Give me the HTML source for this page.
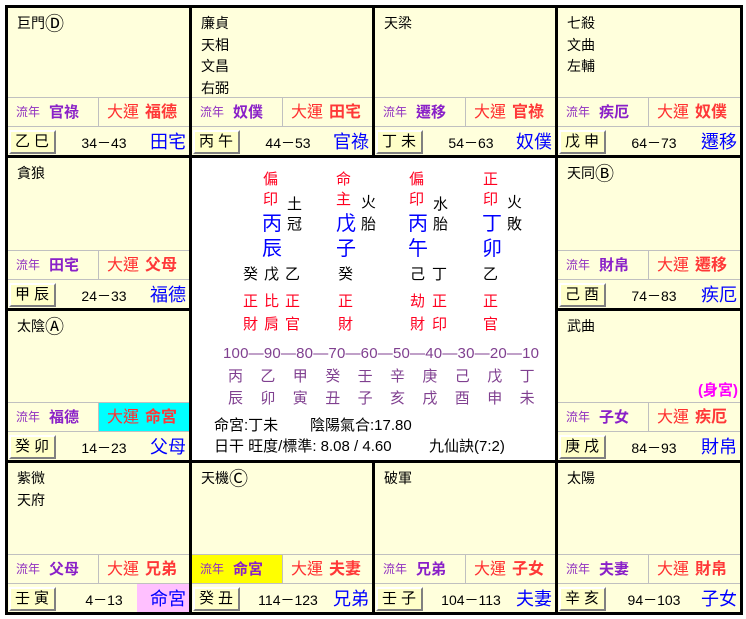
<!DOCTYPE html>
<html><head><meta charset="utf-8"><style>
*{margin:0;padding:0;box-sizing:border-box}
body{width:746px;height:619px;background:#fff;position:relative;overflow:hidden;font-family:"Liberation Sans","Noto Sans CJK TC",sans-serif;font-size:14px;color:#000}
.a{position:absolute;white-space:nowrap;line-height:1}
.frame{position:absolute;left:5px;top:5px;width:738px;height:610px;background:#000}
.c{position:absolute;background:#ffffdc;overflow:hidden}
.st{position:absolute;left:9px;top:5px;font-size:14px;line-height:21.5px}
.ci{font-family:"DejaVu Sans",sans-serif;font-size:19px;vertical-align:-2px;line-height:14px}
.g1,.g2{position:absolute;left:0;right:0;height:1px;background:#c0c0c0}
.gv{position:absolute;left:90px;width:1px;height:29px;background:#c0c0c0}
.ln{position:absolute;left:8px;font-size:12px;color:#9030c0}
.lp{position:absolute;left:41px;font-size:15px;font-weight:bold;color:#8a20c8}
.dy{position:absolute;left:99px;font-size:16px;color:#ff3030}
.dp{position:absolute;left:137px;font-size:16px;font-weight:bold;color:#ff3838}
.bt{position:absolute;left:1px;width:47px;height:24px;background:#ffffc8;border:2px solid;border-color:#fff #808080 #808080 #fff;font-size:15px;text-align:center;line-height:20px;letter-spacing:4px;padding-left:3px}
.ag{position:absolute;left:62px;width:68px;text-align:center;font-size:14px}
.bp{position:absolute;right:3px;font-size:18px;color:#0000ff}
.r{color:#ff0020;font-size:15px}.b{color:#0000ff;font-size:20px}.p{color:#804090}
</style></head><body>
<div class="frame"></div>
<div class="a" style="left:192px;top:158px;width:363px;height:302px;background:#fff"></div>

<div class="c" style="left:8px;top:8px;width:181px;height:147px">
<div class="st">巨門<span class="ci">Ⓓ</span></div>
<div class="g1" style="top:89px"></div><div class="g2" style="top:118px"></div><div class="gv" style="top:89px"></div>
<div class="a ln" style="top:98px">流年</div><div class="a lp" style="top:97px">官祿</div>
<div class="a dy" style="top:97px">大運</div><div class="a dp" style="top:97px">福德</div>
<div class="bt" style="top:122px">乙巳</div><div class="a ag" style="top:128px">34－43</div><div class="a bp" style="top:125px">田宅</div>
</div>

<div class="c" style="left:192px;top:8px;width:180px;height:147px">
<div class="st">廉貞<br>天相<br>文昌<br>右弼</div>
<div class="g1" style="top:89px"></div><div class="g2" style="top:118px"></div><div class="gv" style="top:89px"></div>
<div class="a ln" style="top:98px">流年</div><div class="a lp" style="top:97px">奴僕</div>
<div class="a dy" style="top:97px">大運</div><div class="a dp" style="top:97px">田宅</div>
<div class="bt" style="top:122px">丙午</div><div class="a ag" style="top:128px">44－53</div><div class="a bp" style="top:125px">官祿</div>
</div>

<div class="c" style="left:375px;top:8px;width:180px;height:147px">
<div class="st">天梁</div>
<div class="g1" style="top:89px"></div><div class="g2" style="top:118px"></div><div class="gv" style="top:89px"></div>
<div class="a ln" style="top:98px">流年</div><div class="a lp" style="top:97px">遷移</div>
<div class="a dy" style="top:97px">大運</div><div class="a dp" style="top:97px">官祿</div>
<div class="bt" style="top:122px">丁未</div><div class="a ag" style="top:128px">54－63</div><div class="a bp" style="top:125px">奴僕</div>
</div>

<div class="c" style="left:558px;top:8px;width:182px;height:147px">
<div class="st">七殺<br>文曲<br>左輔</div>
<div class="g1" style="top:89px"></div><div class="g2" style="top:118px"></div><div class="gv" style="top:89px"></div>
<div class="a ln" style="top:98px">流年</div><div class="a lp" style="top:97px">疾厄</div>
<div class="a dy" style="top:97px">大運</div><div class="a dp" style="top:97px">奴僕</div>
<div class="bt" style="top:122px">戊申</div><div class="a ag" style="top:128px">64－73</div><div class="a bp" style="top:125px">遷移</div>
</div>

<div class="c" style="left:8px;top:158px;width:181px;height:150px">
<div class="st">貪狼</div>
<div class="g1" style="top:92px"></div><div class="g2" style="top:121px"></div><div class="gv" style="top:92px"></div>
<div class="a ln" style="top:101px">流年</div><div class="a lp" style="top:100px">田宅</div>
<div class="a dy" style="top:100px">大運</div><div class="a dp" style="top:100px">父母</div>
<div class="bt" style="top:125px">甲辰</div><div class="a ag" style="top:131px">24－33</div><div class="a bp" style="top:128px">福德</div>
</div>

<div class="c" style="left:558px;top:158px;width:182px;height:150px">
<div class="st">天同<span class="ci">Ⓑ</span></div>
<div class="g1" style="top:92px"></div><div class="g2" style="top:121px"></div><div class="gv" style="top:92px"></div>
<div class="a ln" style="top:101px">流年</div><div class="a lp" style="top:100px">財帛</div>
<div class="a dy" style="top:100px">大運</div><div class="a dp" style="top:100px">遷移</div>
<div class="bt" style="top:125px">己酉</div><div class="a ag" style="top:131px">74－83</div><div class="a bp" style="top:128px">疾厄</div>
</div>

<div class="c" style="left:8px;top:311px;width:181px;height:149px">
<div class="st">太陰<span class="ci">Ⓐ</span></div>
<div class="a" style="left:90px;top:91px;width:91px;height:30px;background:#00ffff"></div>
<div class="g1" style="top:91px"></div><div class="g2" style="top:120px"></div><div class="gv" style="top:91px"></div>
<div class="a ln" style="top:100px">流年</div><div class="a lp" style="top:99px">福德</div>
<div class="a dy" style="top:99px">大運</div><div class="a dp" style="top:99px">命宮</div>
<div class="bt" style="top:124px">癸卯</div><div class="a ag" style="top:130px">14－23</div><div class="a bp" style="top:127px">父母</div>
</div>

<div class="c" style="left:558px;top:311px;width:182px;height:149px">
<div class="st">武曲</div>
<div class="a" style="right:2px;top:72px;font-size:15px;font-weight:bold;color:#ff00ff">(身宮)</div>
<div class="g1" style="top:91px"></div><div class="g2" style="top:120px"></div><div class="gv" style="top:91px"></div>
<div class="a ln" style="top:100px">流年</div><div class="a lp" style="top:99px">子女</div>
<div class="a dy" style="top:99px">大運</div><div class="a dp" style="top:99px">疾厄</div>
<div class="bt" style="top:124px">庚戌</div><div class="a ag" style="top:130px">84－93</div><div class="a bp" style="top:127px">財帛</div>
</div>

<div class="c" style="left:8px;top:463px;width:181px;height:149px">
<div class="st">紫微<br>天府</div>
<div class="a" style="left:129px;top:121px;width:52px;height:28px;background:#ffc0ff"></div>
<div class="g1" style="top:91px"></div><div class="g2" style="top:120px"></div><div class="gv" style="top:91px"></div>
<div class="a ln" style="top:100px">流年</div><div class="a lp" style="top:99px">父母</div>
<div class="a dy" style="top:99px">大運</div><div class="a dp" style="top:99px">兄弟</div>
<div class="bt" style="top:124px">壬寅</div><div class="a ag" style="top:130px">4－13</div><div class="a bp" style="top:127px">命宮</div>
</div>

<div class="c" style="left:192px;top:463px;width:180px;height:149px">
<div class="st">天機<span class="ci">Ⓒ</span></div>
<div class="a" style="left:0;top:92px;width:90px;height:28px;background:#ffff00"></div>
<div class="g1" style="top:91px"></div><div class="g2" style="top:120px"></div><div class="gv" style="top:91px"></div>
<div class="a ln" style="top:100px">流年</div><div class="a lp" style="top:99px">命宮</div>
<div class="a dy" style="top:99px">大運</div><div class="a dp" style="top:99px">夫妻</div>
<div class="bt" style="top:124px">癸丑</div><div class="a ag" style="top:130px">114－123</div><div class="a bp" style="top:127px">兄弟</div>
</div>

<div class="c" style="left:375px;top:463px;width:180px;height:149px">
<div class="st">破軍</div>
<div class="g1" style="top:91px"></div><div class="g2" style="top:120px"></div><div class="gv" style="top:91px"></div>
<div class="a ln" style="top:100px">流年</div><div class="a lp" style="top:99px">兄弟</div>
<div class="a dy" style="top:99px">大運</div><div class="a dp" style="top:99px">子女</div>
<div class="bt" style="top:124px">壬子</div><div class="a ag" style="top:130px">104－113</div><div class="a bp" style="top:127px">夫妻</div>
</div>

<div class="c" style="left:558px;top:463px;width:182px;height:149px">
<div class="st">太陽</div>
<div class="g1" style="top:91px"></div><div class="g2" style="top:120px"></div><div class="gv" style="top:91px"></div>
<div class="a ln" style="top:100px">流年</div><div class="a lp" style="top:99px">夫妻</div>
<div class="a dy" style="top:99px">大運</div><div class="a dp" style="top:99px">財帛</div>
<div class="bt" style="top:124px">辛亥</div><div class="a ag" style="top:130px">94－103</div><div class="a bp" style="top:127px">子女</div>
</div>

<!-- center -->
<div class="a r" style="left:263px;top:170px;line-height:20px">偏<br>印</div>
<div class="a r" style="left:336px;top:170px;line-height:20px">命<br>主</div>
<div class="a r" style="left:409px;top:170px;line-height:20px">偏<br>印</div>
<div class="a r" style="left:483px;top:170px;line-height:20px">正<br>印</div>

<div class="a" style="left:287px;top:197px;font-size:15px">土</div>
<div class="a" style="left:361px;top:195px;font-size:15px">火</div>
<div class="a" style="left:433px;top:197px;font-size:15px">水</div>
<div class="a" style="left:507px;top:195px;font-size:15px">火</div>
<div class="a" style="left:287px;top:217px;font-size:15px">冠</div>
<div class="a" style="left:361px;top:217px;font-size:15px">胎</div>
<div class="a" style="left:433px;top:217px;font-size:15px">胎</div>
<div class="a" style="left:507px;top:217px;font-size:15px">敗</div>

<div class="a b" style="left:262px;top:214px">丙</div>
<div class="a b" style="left:336px;top:214px">戊</div>
<div class="a b" style="left:408px;top:214px">丙</div>
<div class="a b" style="left:482px;top:214px">丁</div>
<div class="a b" style="left:262px;top:239px">辰</div>
<div class="a b" style="left:336px;top:239px">子</div>
<div class="a b" style="left:408px;top:239px">午</div>
<div class="a b" style="left:482px;top:239px">卯</div>

<div class="a" style="left:243px;top:267px;font-size:15px">癸</div>
<div class="a" style="left:264px;top:267px;font-size:15px">戊</div>
<div class="a" style="left:285px;top:267px;font-size:15px">乙</div>
<div class="a" style="left:338px;top:267px;font-size:15px">癸</div>
<div class="a" style="left:410px;top:267px;font-size:15px">己</div>
<div class="a" style="left:432px;top:267px;font-size:15px">丁</div>
<div class="a" style="left:483px;top:267px;font-size:15px">乙</div>

<div class="a r" style="left:243px;top:294px">正</div><div class="a r" style="left:264px;top:294px">比</div><div class="a r" style="left:285px;top:294px">正</div>
<div class="a r" style="left:338px;top:294px">正</div>
<div class="a r" style="left:410px;top:294px">劫</div><div class="a r" style="left:432px;top:294px">正</div>
<div class="a r" style="left:483px;top:294px">正</div>
<div class="a r" style="left:243px;top:317px">財</div><div class="a r" style="left:264px;top:317px">肩</div><div class="a r" style="left:285px;top:317px">官</div>
<div class="a r" style="left:338px;top:317px">財</div>
<div class="a r" style="left:410px;top:317px">財</div><div class="a r" style="left:432px;top:317px">印</div>
<div class="a r" style="left:483px;top:317px">官</div>

<div class="a p" style="left:223px;top:346px;font-size:15px;letter-spacing:0.2px">100—90—80—70—60—50—40—30—20—10</div>
<div class="a p" style="left:228px;top:369px;font-size:15px;letter-spacing:17.4px">丙乙甲癸壬辛庚己戊丁</div>
<div class="a p" style="left:228px;top:391px;font-size:15px;letter-spacing:17.4px">辰卯寅丑子亥戌酉申未</div>

<div class="a" style="left:214px;top:418px;font-size:15px">命宮:丁未</div>
<div class="a" style="left:310px;top:418px;font-size:15px">陰陽氣合:17.80</div>
<div class="a" style="left:214px;top:439px;font-size:15px">日干 旺度/標準: 8.08 / 4.60</div>
<div class="a" style="left:429px;top:439px;font-size:15px">九仙訣(7:2)</div>
</body></html>
